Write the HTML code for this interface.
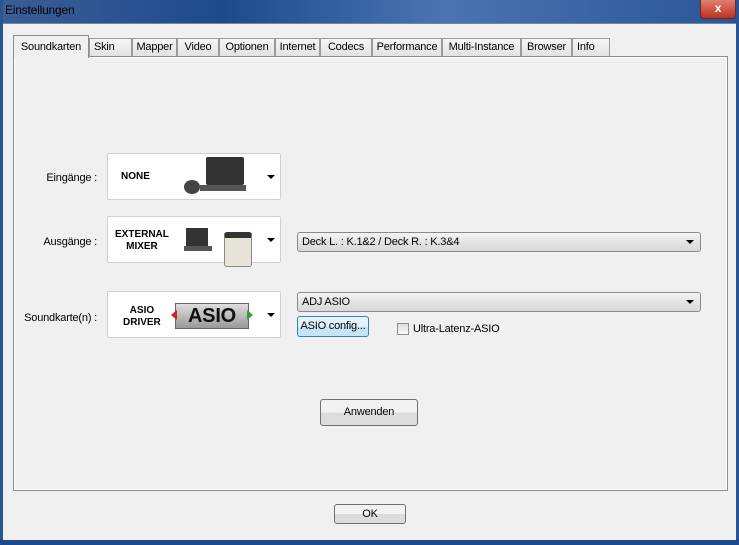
<!DOCTYPE html><html><head><style>
body{margin:0;width:739px;height:545px;overflow:hidden;font-family:"Liberation Sans",sans-serif;font-size:11px;letter-spacing:-0.2px;background:#f0f0f0;position:relative}
.a{position:absolute}
.title{left:0;top:0;width:739px;height:23px;background:linear-gradient(90deg,#3a5f95,#1e4a8c 30%,#4a75b0 60%,#2a5595);}
.tab{position:absolute;top:38px;height:18px;border:1px solid #9a9a9a;border-bottom:none;background:linear-gradient(#f6f6f6,#e2e2e2);box-sizing:border-box;text-align:center;line-height:17px;font-size:11px}
.box{position:absolute;left:107px;width:174px;height:47px;background:#fff;border:1px solid #d0d0d0;border-radius:2px;box-sizing:border-box}
.box b{position:absolute;font-size:10px;font-weight:900;text-align:center;line-height:12px;letter-spacing:0}
.arr{position:absolute;right:5px;top:21px;width:0;height:0;border-left:4px solid transparent;border-right:4px solid transparent;border-top:4px solid #000}
.lbl{position:absolute;right:642px;text-align:right}
.dd{position:absolute;left:297px;width:404px;height:20px;border:1px solid #8a8a8a;border-radius:3px;background:linear-gradient(#f4f4f4,#e4e4e4 50%,#d8d8d8);box-sizing:border-box;line-height:18px;padding-left:4px}
.dd:after{content:"";position:absolute;right:6px;top:7px;border-left:4px solid transparent;border-right:4px solid transparent;border-top:4px solid #000}
.btn{position:absolute;border:1px solid #707070;border-radius:3px;background:linear-gradient(#f2f2f2 50%,#dcdcdc 50%);box-sizing:border-box;text-align:center}
</style></head><body>
<div class="a title"></div>
<div class="a" style="left:0;top:0;width:3px;height:545px;background:#2a5595"></div>
<div class="a" style="right:0;top:0;width:3px;height:545px;background:#2a5595"></div>
<div class="a" style="left:0;top:539px;width:739px;height:6px;background:#1c4a8c"></div>
<div class="a" style="left:5px;top:3px;color:#000;font-size:12px">Einstellungen</div>
<div class="a" style="left:700px;top:0;width:36px;height:19px;background:linear-gradient(#e08070,#c03020);border:1px solid #6a2a20;border-top:none;border-radius:0 0 4px 4px;box-sizing:border-box;color:#fff;text-align:center;font-weight:bold;font-size:12px;line-height:17px">x</div>
<div class="a" style="left:3px;top:23px;width:733px;height:516px;background:#f0f0f0;border-top:1px solid #6f88a8"></div>
<div class="a" style="left:13px;top:56px;width:715px;height:435px;border:1px solid #898c95;background:#fcfcfc;box-sizing:border-box"><div style="position:absolute;left:0;top:0;right:0;bottom:0;border:1px solid #fff;background:#f0f0f0"></div></div>
<div class="tab" style="left:89px;width:43px;text-align:left;padding-left:4px">Skin</div>
<div class="tab" style="left:132px;width:45px">Mapper</div>
<div class="tab" style="left:177px;width:42px">Video</div>
<div class="tab" style="left:219px;width:56px">Optionen</div>
<div class="tab" style="left:275px;width:45px">Internet</div>
<div class="tab" style="left:320px;width:52px">Codecs</div>
<div class="tab" style="left:372px;width:70px">Performance</div>
<div class="tab" style="left:442px;width:79px">Multi-Instance</div>
<div class="tab" style="left:521px;width:51px">Browser</div>
<div class="tab" style="left:572px;width:38px;text-align:left;padding-left:4px">Info</div>
<div class="tab" style="left:13px;top:35px;width:76px;height:23px;background:#f0f0f0;border-color:#898c95;line-height:22px;z-index:2">Soundkarten</div>

<div class="lbl" style="top:172px">Eingänge :</div>
<div class="lbl" style="top:236px">Ausgänge :</div>
<div class="lbl" style="top:312px">Soundkarte(n) :</div>

<div class="box" style="top:153px"><b style="left:13px;top:17px">NONE</b>
<div class="a" style="left:98px;top:3px;width:38px;height:28px;background:#333;border-radius:2px"></div>
<div class="a" style="left:92px;top:31px;width:46px;height:6px;background:#555"></div>
<div class="a" style="left:76px;top:26px;width:16px;height:14px;background:#444;border-radius:50%"></div>
<div class="arr"></div></div>
<div class="box" style="top:216px"><b style="left:7px;top:12px">EXTERNAL<br>MIXER</b>
<div class="a" style="left:78px;top:11px;width:22px;height:18px;background:#333"></div>
<div class="a" style="left:76px;top:29px;width:28px;height:5px;background:#555"></div>
<div class="a" style="left:116px;top:15px;width:26px;height:28px;background:#e8e4d8;border:1px solid #888;border-top:6px solid #333;border-radius:3px"></div>
<div class="arr"></div></div>
<div class="box" style="top:291px"><b style="left:15px;top:13px">ASIO<br>DRIVER</b>
<div class="a" style="left:67px;top:11px;width:72px;height:24px;background:linear-gradient(#ddd,#999);border:1px solid #666;font:bold 20px 'Liberation Sans',sans-serif;line-height:24px;text-align:center;color:#111">ASIO</div>
<div class="a" style="left:63px;top:18px;border-top:5px solid transparent;border-bottom:5px solid transparent;border-right:6px solid #d02020"></div>
<div class="a" style="left:139px;top:18px;border-top:5px solid transparent;border-bottom:5px solid transparent;border-left:6px solid #30a030"></div>
<div class="arr"></div></div>

<div class="dd" style="top:232px">Deck L. : K.1&amp;2 / Deck R. : K.3&amp;4</div>
<div class="dd" style="top:292px">ADJ ASIO</div>
<div class="btn" style="left:297px;top:316px;width:72px;height:21px;line-height:19px;border-color:#3c7fb1;background:linear-gradient(#e5f4fc 50%,#c4e5f6 50%)">ASIO config...</div>
<div class="a" style="left:397px;top:323px;width:12px;height:12px;border:1px solid #8e8f8f;background:linear-gradient(#ddd,#fbfbfb);box-sizing:border-box"></div>
<div class="a" style="left:413px;top:323px">Ultra-Latenz-ASIO</div>
<div class="btn" style="left:320px;top:399px;width:98px;height:27px;line-height:25px">Anwenden</div>
<div class="btn" style="left:334px;top:504px;width:72px;height:20px;line-height:18px">OK</div>
</body></html>
